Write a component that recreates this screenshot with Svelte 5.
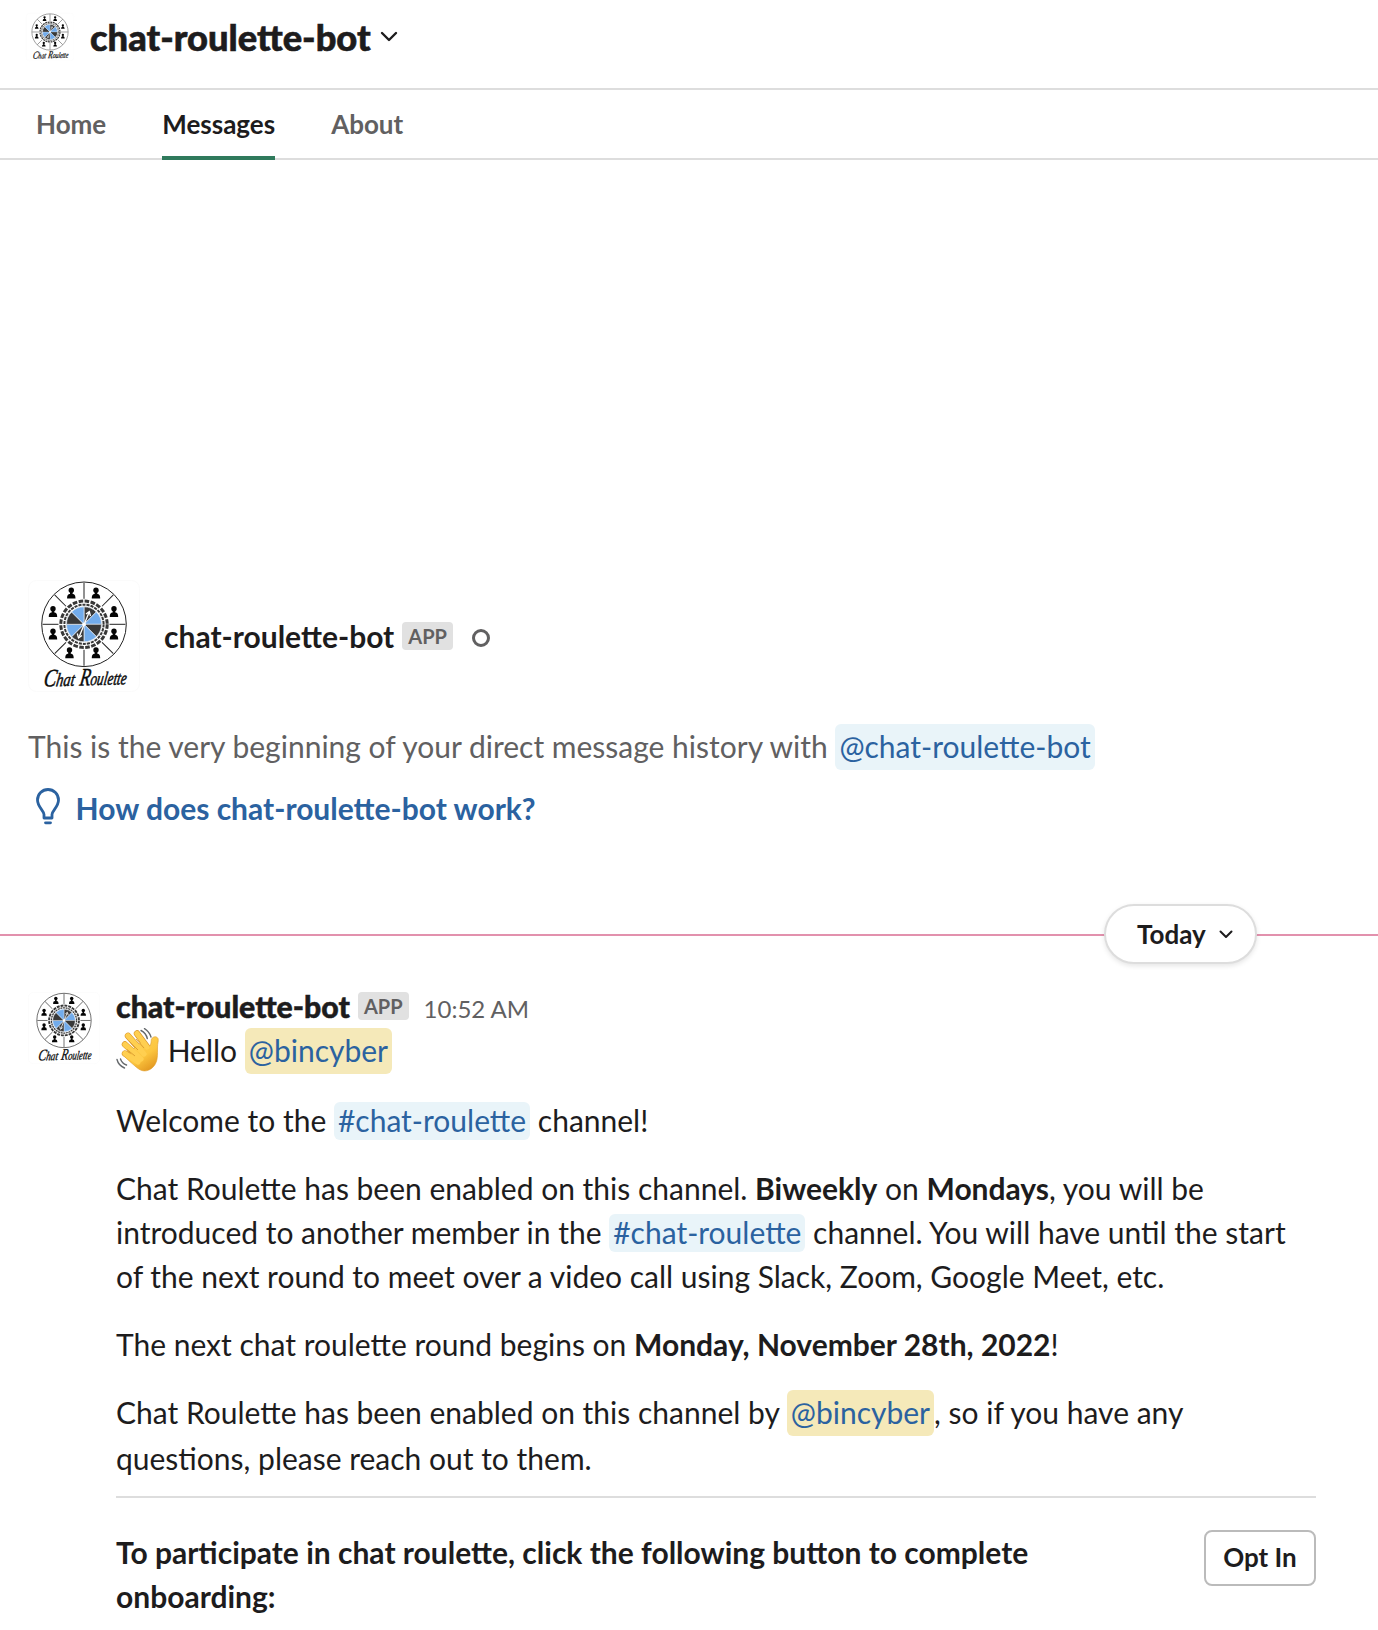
<script>
  const tabs = ['Home', 'Messages', 'About'];
  let active = $state('Messages');

  const people = [
    [43.3, 13], [68, 13], [86, 31.5], [86, 54],
    [68, 72.8], [41.5, 72.8], [25, 54], [25, 31.5]
  ];
  const angles = [0, 45, 90, 135, 180, 225, 270, 315];
</script>

{#snippet logo(kind)}
  <svg class="logo {kind}" viewBox="0 0 112 112" aria-label="Chat Roulette">
    <rect x=".5" y=".5" width="111" height="111" rx="8" fill="#fff" stroke="#fbfbfb" />
    <circle cx="56" cy="44.3" r="42.3" fill="none" stroke="#222" stroke-width="1" />
    {#each angles as a, i}
      <g transform="translate(56 44.3) rotate({a})">
        <path d="M0 -25.500V-41.500" stroke="#222" stroke-width="1" />
        <path d="M0 0V-17.500A17.500 17.500 0 0 1 12.370 -12.370Z" fill={i % 2 ? '#72acec' : '#393939'} stroke="#dfe6ee" stroke-width=".7" />
      </g>
    {/each}
    <circle cx="56" cy="44.3" r="19.6" fill="none" stroke="#383838" stroke-width="2" stroke-dasharray="3.1 1" />
    <circle cx="56" cy="44.3" r="23.2" fill="none" stroke="#383838" stroke-width="3" stroke-dasharray="4.6 1.47" />
    <path d="M51.300 56.500L61 32.500M58 34L61.300 31.500L62.500 36M49.300 53.500L50.500 58L54 55.500" fill="none" stroke="#fff" stroke-width="1.3" />
    <circle cx="56" cy="44.3" r="1.8" fill="#fff" />
    {#each people as [x, y]}
      <g transform="translate({x} {y})" fill="#050505">
        <circle cx="0" cy="-2.8" r="2.7" />
        <path d="M-1.300 -1H1.300V1C3 1 4.200 2 4.200 5.500H-4.200C-4.200 2 -3 1 -1.300 1Z" />
      </g>
    {/each}
    <g transform="translate(15 106.5) rotate(-1.5) skewX(-10)" class="script">
      <text x="0" y="0" textLength="31" lengthAdjust="spacingAndGlyphs"><tspan class="cap">C</tspan>hat</text>
      <text x="36" y="0" textLength="47" lengthAdjust="spacingAndGlyphs"><tspan class="cap">R</tspan>oulette</text>
    </g>
  </svg>
{/snippet}

<main>
  <header>
    {@render logo('small')}
    <h1>chat-roulette-bot</h1>
    <svg class="chev" viewBox="0 0 18 12"><path d="M2 2L9 9L16 2" /></svg>
  </header>

  <nav>
    {#each tabs as t}
      <button class:active={active === t} onclick={() => (active = t)}>{t}</button>
    {/each}
  </nav>

  <section class="intro">
    <div class="who">
      {@render logo('large')}
      <strong>chat-roulette-bot</strong>
      <span class="badge">APP</span>
      <span class="presence"></span>
    </div>
    <p>This is the very beginning of your direct message history with <a class="mention box">@chat-roulette-bot</a></p>
    <div class="how">
      <svg viewBox="0 0 24 37"><path d="M8 30V26.500C8 22.500 1.500 19 1.500 12A10.500 10.500 0 0 1 22.500 12C22.500 19 16 22.500 16 26.500V30Z" /><path d="M9.500 34.800H14.500" class="base" /></svg>
      <span>How does chat-roulette-bot work?</span>
    </div>
  </section>

  <div class="divider">
    <button class="day">Today <svg viewBox="0 0 14 9"><path d="M1.500 1.500L7 7L12.500 1.500" /></svg></button>
  </div>

  <article>
    {@render logo('medium')}
    <div class="body">
      <div class="meta">
        <strong>chat-roulette-bot</strong>
        <span class="badge">APP</span>
        <time>10:52 AM</time>
      </div>
      <p>
        <svg class="wave" viewBox="0 0 44 44">
          <defs>
            <linearGradient id="skin" x1="0" y1="0" x2=".7" y2="1">
              <stop offset="0" stop-color="#ffd55c" />
              <stop offset=".65" stop-color="#fcc63f" />
              <stop offset="1" stop-color="#e49a22" />
            </linearGradient>
          </defs>
          <g stroke="#d9952b" stroke-width="6.400" stroke-linecap="round" fill="none">
            <path d="M9 25.500L22 34M9 16.500L25 31M12 7.800L28 26M21 5.500L31 19" />
          </g>
          <path d="M16 30L14 24L28 12L31.500 19C34.500 19 35 16 35.200 12.500C35.500 8.500 40.500 7.500 42 10.500C42.800 13 41.500 15 41.500 19C41.500 27 42 33 38 38C33.500 43.500 27 44.500 22 40.500C17 36.500 11 31 8 28Z" fill="url(#skin)" stroke="#df9e2c" stroke-width=".6" />
          <g stroke="#ffcf50" stroke-width="5.200" stroke-linecap="round" fill="none">
            <path d="M9 25.500L22 34M9 16.500L25 31M12 7.800L28 26M21 5.500L31 19" />
          </g>
          <path d="M11 21.500L19 28M13 13L22 22M20 11L28 20" stroke="#d99a2f" stroke-width=".9" fill="none" />
          <path d="M25 2.500C28 4 30.500 7 31.300 10.500M28.500 .700C31.500 2.500 34 6 35 9M4.500 31C5.500 34 7.500 36 10.500 37M1 31.500C2 35.500 5 38.500 8.500 40" stroke="#65696c" stroke-width="1.400" stroke-linecap="round" fill="none" />
        </svg>
        Hello <a class="mention box me">@bincyber</a>
      </p>
      <p>Welcome to the <a class="mention">#chat-roulette</a> channel!</p>
      <p>Chat Roulette has been enabled on this channel. <b>Biweekly</b> on <b>Mondays</b>, you will be<br />introduced to another member in the <a class="mention">#chat-roulette</a> channel. You will have until the start<br />of the next round to meet over a video call using Slack, Zoom, Google Meet, etc.</p>
      <p>The next chat roulette round begins on <b>Monday, November 28th, 2022</b>!</p>
      <p>Chat Roulette has been enabled on this channel by <a class="mention box me">@bincyber</a>, so if you have any<br />questions, please reach out to them.</p>
      <hr />
      <div class="action">
        <b>To participate in chat roulette, click the following button to complete<br />onboarding:</b>
        <button>Opt In</button>
      </div>
    </div>
  </article>
</main>

<style>
  :global(body) { margin: 0; background: #fff; }
  main {
    width: 1378px;
    height: 1630px;
    overflow: hidden;
    font: 30px/44px Lato, "Liberation Sans", sans-serif;
    color: #1d1c1d;
  }
  button { font: inherit; color: inherit; background: none; border: 0; padding: 0; }
  p, h1 { margin: 0; }
  b, strong { font-weight: 700; }
  svg { display: block; flex: none; }
  .logo { overflow: visible; }
  .logo.small { width: 48px; height: 48px; }
  .logo.medium { width: 72px; height: 72px; }
  .logo.large { width: 112px; height: 112px; }
  .script {
    font: italic 19px "Liberation Serif", serif;
    fill: #0a0a0a;
    stroke: #0a0a0a;
    stroke-width: .5px;
  }
  .cap { font-size: 25px; }
  header {
    box-sizing: border-box;
    height: 90px;
    padding: 13px 26px 0;
    display: flex;
    align-items: flex-start;
    border-bottom: 2px solid #dddddd;
  }
  h1 { font-size: 36.3px; line-height: 48px; font-weight: 900; margin-left: 16px; -webkit-text-stroke: .6px #1d1c1d; }
  .chev { width: 18px; height: 12px; margin: 18px 0 0 9px; }
  .chev path, .day path { fill: none; stroke: #1d1c1d; stroke-width: 2.4; stroke-linecap: round; stroke-linejoin: round; }
  nav {
    box-sizing: border-box;
    height: 70px;
    padding-left: 36px;
    display: flex;
    gap: 56px;
    border-bottom: 2px solid #dddddd;
  }
  nav button {
    box-sizing: border-box;
    height: 70px;
    padding-top: 2px;
    font-size: 26px;
    font-weight: 700;
    color: #616061;
    border-bottom: 4px solid transparent;
  }
  nav .active { color: #1d1c1d; border-color: #2f7a5c; }
  .intro { padding: 420px 28px 0; }
  .who { display: flex; align-items: center; height: 112px; }
  .who strong { margin-left: 24px; }
  .badge {
    box-sizing: border-box;
    height: 28px;
    padding: 0 6px;
    margin-left: 8px;
    border-radius: 4px;
    background: #e1e1e1;
    color: #616061;
    font-size: 20px;
    line-height: 28px;
    font-weight: 700;
  }
  .presence {
    box-sizing: border-box;
    width: 18px;
    height: 18px;
    margin: 4px 0 0 19px;
    border: 3px solid #616061;
    border-radius: 50%;
  }
  .intro p { margin-top: 32px; color: #616061; }
  .mention { color: #2b62a0; background: #e9f4f9; border-radius: 6px; padding: 0 4px 2px; }
  .mention.box { display: inline-block; }
  .mention.me { background: #f5e9b9; }
  .how {
    display: flex;
    align-items: center;
    height: 44px;
    margin-top: 16px;
    padding-left: 8px;
    gap: 15.5px;
    color: #2b62a0;
    font-weight: 700;
  }
  .how svg { width: 24px; height: 37px; margin-top: -4px; }
  .how path { fill: none; stroke: currentColor; stroke-width: 2.8; stroke-linejoin: round; }
  .how .base { stroke-linecap: round; }
  .divider {
    height: 60px;
    margin-top: 74px;
    padding-right: 121px;
    display: flex;
    justify-content: flex-end;
    background: linear-gradient(#e291ad, #e291ad) 0 30px / 100% 2px no-repeat;
  }
  .day {
    box-sizing: border-box;
    width: 153px;
    height: 60px;
    padding-left: 31px;
    display: flex;
    align-items: center;
    gap: 13px;
    border: 2px solid #dddddd;
    border-radius: 30px;
    background: #fff;
    box-shadow: 0 2px 5px rgba(0, 0, 0, .1);
    font-size: 26px;
    font-weight: 700;
  }
  .day svg { width: 14px; height: 9px; }
  .day path { stroke-width: 2; }
  article { display: flex; padding: 28px 62px 0 28px; }
  .body { flex: 1; margin-left: 16px; }
  .meta { display: flex; align-items: center; height: 36px; margin-top: -4px; padding-bottom: 4px; }
  .meta strong { font-size: 30.25px; font-weight: 900; -webkit-text-stroke: .5px #1d1c1d; }
  time { margin-left: 15px; color: #616061; font-size: 24px; padding-top: 5px; }
  .body p + p { margin-top: 24px; }
  .wave { display: inline-block; width: 44px; height: 44px; vertical-align: -6px; margin: -4px 0; }
  hr { height: 2px; margin: 16px 0 0; border: 0; background: #dddddd; }
  .action { display: flex; justify-content: space-between; padding-top: 32px; }
  .action button {
    box-sizing: border-box;
    width: 112px;
    height: 56px;
    padding-bottom: 2px;
    border: 2px solid #bbbbbb;
    border-radius: 8px;
    font-size: 26px;
    line-height: 50px;
    font-weight: 700;
  }
</style>
